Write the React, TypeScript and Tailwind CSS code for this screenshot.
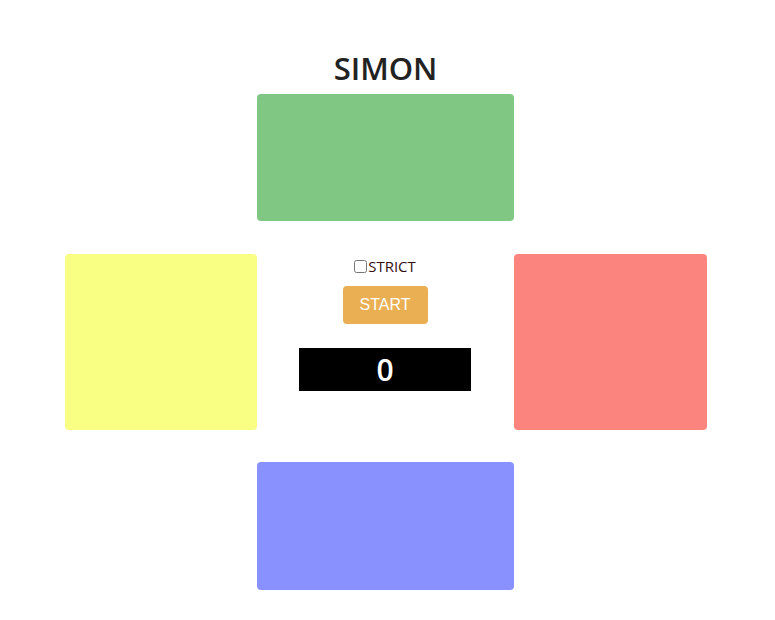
export default function App() {
  return (
    <div className="min-h-screen bg-white flex flex-col items-center pt-[46px] pr-[4px]" style={{ fontFamily: '"Open Sans", sans-serif' }}>
      <h1 className="text-[31px] leading-[45px] text-[#222] font-semibold">SIMON</h1>
      <div className="mt-[3px] w-[257px] h-[127px] rounded-[4px] bg-[#80c783]" />
      <div className="mt-[33px] flex">
        <div className="w-[192px] h-[176px] rounded-[4px] bg-[#f9ff83]" />
        <div className="w-[257px] flex flex-col items-center pt-[1px]">
          <label className="flex items-center text-[15px] leading-[22px] text-[#331111]">
            <input type="checkbox" className="w-[13px] h-[13px] m-0 mr-px accent-gray-400" />
            STRICT
          </label>
          <button className="mt-[9px] w-[85px] h-[38px] rounded-[4px] bg-[#eaaf52] text-white text-[16px]" style={{ fontFamily: '"Liberation Sans", Arial, sans-serif' }}>
            START
          </button>
          <div className="mt-[24px] w-[172px] h-[43px] bg-black text-white text-[30px] font-semibold leading-[43px] text-center">
            0
          </div>
        </div>
        <div className="w-[193px] h-[176px] rounded-[4px] bg-[#fc847f]" />
      </div>
      <div className="mt-[32px] w-[257px] h-[128px] rounded-[4px] bg-[#8891fe]" />
    </div>
  );
}
